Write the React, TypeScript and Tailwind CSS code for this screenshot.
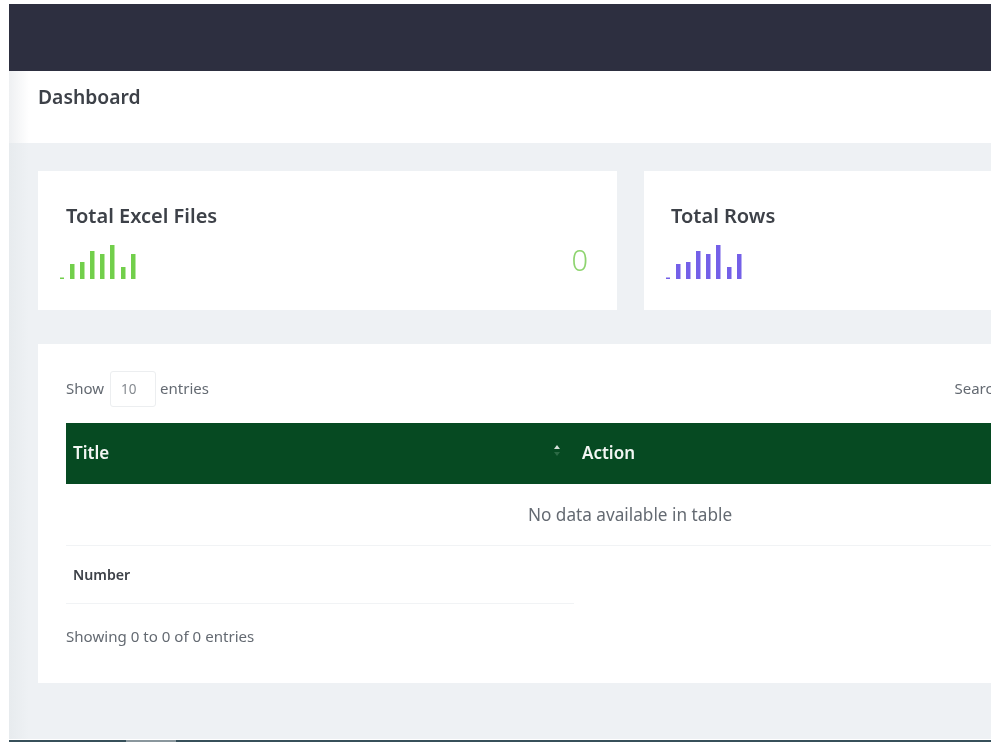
const bars = [
  { x: 10, h: 15 },
  { x: 20, h: 17 },
  { x: 30, h: 28 },
  { x: 40, h: 25 },
  { x: 50, h: 34 },
  { x: 61, h: 12 },
  { x: 71, h: 25 },
]

function Sparkline({ color }: { color: string }) {
  return (
    <svg width="76" height="35" viewBox="0 0 76 35" className="ml-[-6px] mt-[3px]">
      <rect x="0" y="32.5" width="4" height="1.5" fill={color} />
      {bars.map((bar) => (
        <rect key={bar.x} x={bar.x} y={34 - bar.h} width="4.5" height={bar.h} fill={color} />
      ))}
    </svg>
  )
}

function StatCard({ title, color, value }: { title: string; color: string; value?: string }) {
  return (
    <div className="h-[139px] w-[579px] shrink-0 bg-white pl-7 pr-[29px] pt-[31px]">
      <h3 className={value ? "text-[20px] leading-[28px] font-semibold text-[#3d4148]" : "-ml-px text-[20px] leading-[28px] font-semibold text-[#3d4148]"}>
        {title}
      </h3>
      <div className="mt-[12px] flex items-start justify-between">
        <Sparkline color={color} />
        {value && <span className="mt-[-1px] text-[29px] leading-[38px] font-light text-[#8ed46f]">{value}</span>}
      </div>
    </div>
  )
}

export default function App() {
  return (
    <div className="h-[751px] w-[1000px] overflow-hidden bg-white px-[9px] pt-1 font-['Noto_Sans',sans-serif] blur-[0.4px]">
      <div className="h-[67px] bg-[#2d2f40]" />

      <div className="flex h-[72px] items-start bg-[linear-gradient(90deg,#eef0f2_0,#ffffff_20px)] pl-[29px] pt-[12px]">
        <h1 className="text-[19.3px] leading-[28px] font-semibold text-[#3d4148]">Dashboard</h1>
      </div>

      <div className="h-[596px] overflow-hidden bg-[linear-gradient(90deg,#e7ebee_0,#eef1f4_20px)] pl-[29px] pt-7">
        <div className="flex w-[1300px] gap-[27px]">
          <StatCard title="Total Excel Files" color="#72cf4b" value="0" />
          <StatCard title="Total Rows" color="#7460e8" />
        </div>

        <div className="mt-[34px] h-[339px] w-[1184px] bg-white px-7 pt-[27px]">
          <div className="flex h-[36px] items-center justify-between text-[15px] text-[#646a72]">
            <div className="flex items-center">
              <span className="mb-[2px]">Show</span>
              <span className="ml-[6px] flex h-[36px] w-[46px] items-center rounded-[3px] border border-[#eceef0] pl-[10px] text-[13.5px] text-[#858a90]">
                10
              </span>
              <span className="mb-[2px] ml-1">entries</span>
            </div>
            <span className="mb-[2px] mr-[188px]">Search:</span>
          </div>

          <div className="mt-4 flex h-[61px] items-center bg-[#064a22] pb-[2px] text-[17px] font-semibold text-[#f2f6f3]">
            <div className="relative w-[508px] pl-[7px]">
              Title
              <span className="absolute right-[14px] top-[5px] flex flex-col gap-[3px]">
                <span className="h-0 w-0 border-x-[3px] border-b-[4px] border-x-transparent border-b-[#d5dfd9]" />
                <span className="h-0 w-0 border-x-[3px] border-t-[4px] border-x-transparent border-t-[#2c6a45]" />
              </span>
            </div>
            <div className="pl-2">Action</div>
          </div>

          <div className="flex h-[62px] items-center justify-center border-b border-[#f1f3f5] text-[17.2px] text-[#646a72]">
            No data available in table
          </div>

          <div className="flex h-[58px] w-[508px] items-center border-b border-[#f1f3f5] pl-[7px] text-[14.2px] font-semibold text-[#3d4148]">
            Number
          </div>

          <p className="mt-[21px] text-[15.1px] leading-[22px] text-[#646a72]">Showing 0 to 0 of 0 entries</p>
        </div>
      </div>

      <div className="mt-px flex h-[2px]">
        <div className="w-[117px] bg-[#37505a]" />
        <div className="w-[50px] bg-[#8a979d]" />
        <div className="flex-1 bg-[#37505a]" />
      </div>
    </div>
  )
}
